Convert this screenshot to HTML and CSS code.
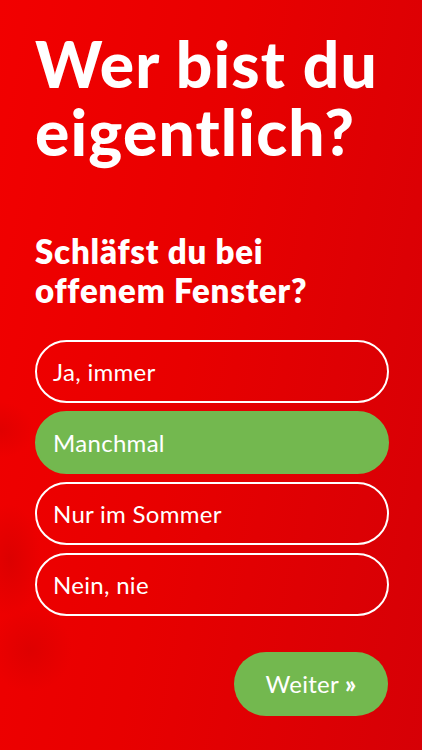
FILE: index.html
```html
<!DOCTYPE html>
<html lang="de">
<head>
<meta charset="utf-8">
<title>Wer bist du eigentlich?</title>
<link rel="stylesheet" href="styles.css">
</head>
<body>
<main class="screen">
  <div class="texture"></div>
  <h1 class="title">Wer bist du eigentlich?</h1>
  <h2 class="question">Schläfst du bei offenem Fenster?</h2>
  <div class="options">
    <button class="option">Ja, immer</button>
    <button class="option selected">Manchmal</button>
    <button class="option">Nur im Sommer</button>
    <button class="option">Nein, nie</button>
  </div>
  <div class="footer">
    <button class="next">Weiter <span class="chev">»</span></button>
  </div>
</main>
</body>
</html>
```
FILE: styles.css
```css
* { box-sizing: border-box; }
html, body { margin: 0; padding: 0; }
body {
  width: 422px;
  height: 750px;
  overflow: hidden;
  font-family: "Lato", "Noto Sans", sans-serif;
  color: #fff;
}
.screen {
  position: relative;
  width: 422px;
  height: 750px;
  padding: 30px 34px 0 35px;
  display: flex;
  flex-direction: column;
  background: linear-gradient(100deg, #f20000 0%, #e80000 45%, #d60006 100%);
  overflow: hidden;
}
.texture {
  position: absolute;
  left: -70px;
  top: 390px;
  width: 200px;
  height: 320px;
  background:
    radial-gradient(ellipse 50px 40px at 70px 40px, rgba(150,0,0,0.16), transparent 70%),
    radial-gradient(ellipse 45px 80px at 80px 170px, rgba(140,0,0,0.18), transparent 70%),
    radial-gradient(ellipse 60px 60px at 100px 260px, rgba(150,0,0,0.16), transparent 70%);
  pointer-events: none;
}
.title {
  position: relative;
  margin: 0;
  font-size: 64px;
  line-height: 68px;
  font-weight: 900;
  letter-spacing: 1.2px;
  width: 370px;
}
.question {
  position: relative;
  margin: 66px 0 0 0;
  font-size: 33px;
  line-height: 39px;
  font-weight: 800;
  letter-spacing: 0.8px;
  width: 320px;
}
.options {
  position: relative;
  margin-top: 30px;
  display: flex;
  flex-direction: column;
  gap: 8px;
}
.option {
  height: 63px;
  border: 2px solid #fff;
  border-radius: 32px;
  background: transparent;
  color: #fff;
  font-family: inherit;
  font-size: 24px;
  font-weight: 400;
  letter-spacing: 0.3px;
  text-align: left;
  padding: 0 0 0 16px;
  width: 354px;
}
.option.selected {
  background: #73b84f;
  border-color: #73b84f;
}
.footer {
  position: relative;
  margin-top: 36px;
  display: flex;
  justify-content: flex-end;
}
.next {
  width: 154px;
  height: 64px;
  border: none;
  border-radius: 32px;
  background: #73b84f;
  color: #fff;
  font-family: inherit;
  font-size: 24px;
  font-weight: 400;
  letter-spacing: 0.3px;
  padding: 0 0 2px 0;
}
.chev { font-weight: 900; }
```
